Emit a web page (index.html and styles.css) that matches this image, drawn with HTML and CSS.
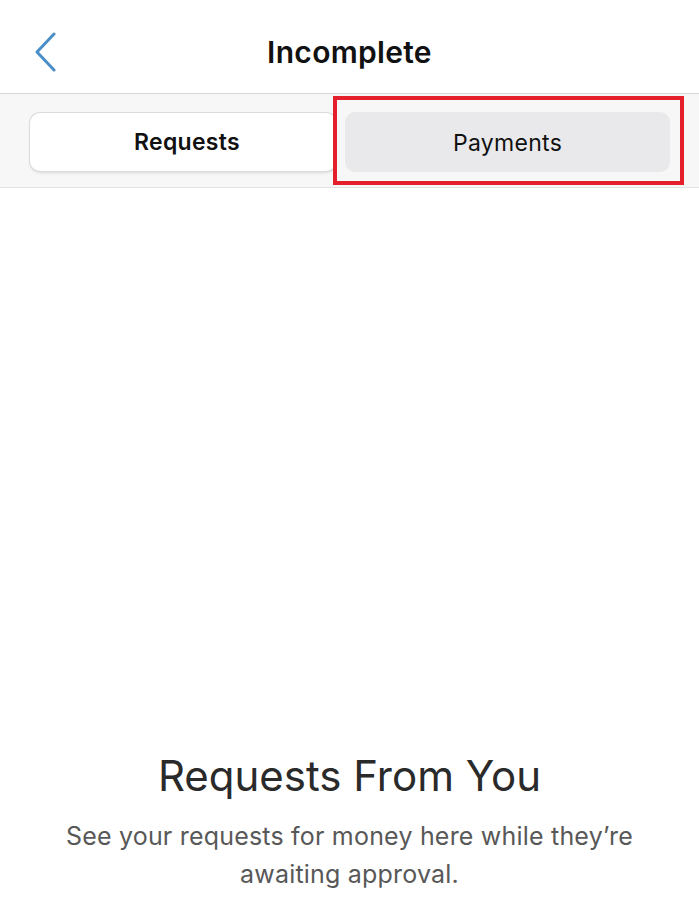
FILE: index.html
```html
<!DOCTYPE html>
<html lang="en">
<head>
  <meta charset="UTF-8">
  <meta name="viewport" content="width=device-width, initial-scale=1.0">
  <title>Incomplete</title>
  <link rel="stylesheet" href="styles.css">
</head>
<body>
  <header class="topbar">
    <button class="back" type="button" aria-label="Back">
      <svg width="24" height="40" viewBox="0 0 24 40">
        <polyline points="20,2 3,20 20,38" fill="none" stroke="#4a8fc8" stroke-width="3" stroke-linecap="round" stroke-linejoin="round"/>
      </svg>
    </button>
    <h1 class="title">Incomplete</h1>
  </header>

  <div class="tabs">
    <button class="tab tab-active" type="button">Requests</button>
    <div class="highlight">
      <button class="tab tab-off" type="button">Payments</button>
    </div>
  </div>

  <main class="empty">
    <h2 class="empty-title">Requests From You</h2>
    <p class="empty-text">See your requests for money here while they’re awaiting approval.</p>
  </main>
</body>
</html>
```

FILE: styles.css
```css
body {
  margin: 0;
  font-family: Inter, "Liberation Sans", sans-serif;
  background: #fff;
  color: #111;
}
.topbar {
  position: relative;
  height: 94px;
  display: flex;
  align-items: center;
  justify-content: center;
  border-bottom: 1px solid #d6d6d6;
  box-sizing: border-box;
  padding-top: 10px;
}
.back {
  position: absolute;
  left: 34px;
  top: 32px;
  padding: 0;
  border: none;
  background: none;
}
.title {
  margin: 0;
  font-size: 30px;
  font-weight: 600;
  letter-spacing: 0.3px;
}
.tabs {
  height: 94px;
  display: flex;
  align-items: center;
  padding: 2px 15px 0 30px;
  background: #f7f7f7;
  border-bottom: 1px solid #e2e2e2;
  box-sizing: border-box;
}
.tab {
  height: 58px;
  border: none;
  border-radius: 10px;
  font-family: inherit;
  font-size: 23px;
  color: #111;
  letter-spacing: 0.3px;
  padding-top: 2px;
}
.tab-active {
  width: 306px;
  flex-shrink: 0;
  padding-left: 14px;
  background: #fff;
  font-weight: 600;
  box-shadow: 0 0 0 1px #dcdcdc, 0 2px 3px rgba(0, 0, 0, 0.12);
}
.highlight {
  display: flex;
  align-items: center;
  width: 351px;
  height: 89px;
  margin-left: -3px;
  margin-top: -2px;
  border: 4px solid #e21f2b;
  padding: 2px 10px 0 8px;
  box-sizing: border-box;
  position: relative;
}
.tab-off {
  flex: 1;
  height: 60px;
  padding-top: 4px;
  background: #e9e9eb;
  font-weight: 400;
}
.empty {
  padding: 562px 30px 0;
  text-align: center;
}
.empty-title {
  margin: 0;
  font-size: 42px;
  font-weight: 400;
  color: #2a2a2a;
}
.empty-text {
  margin: 16px auto 0;
  max-width: 600px;
  font-size: 25px;
  line-height: 38px;
  color: #585858;
  letter-spacing: 0.2px;
}
```
